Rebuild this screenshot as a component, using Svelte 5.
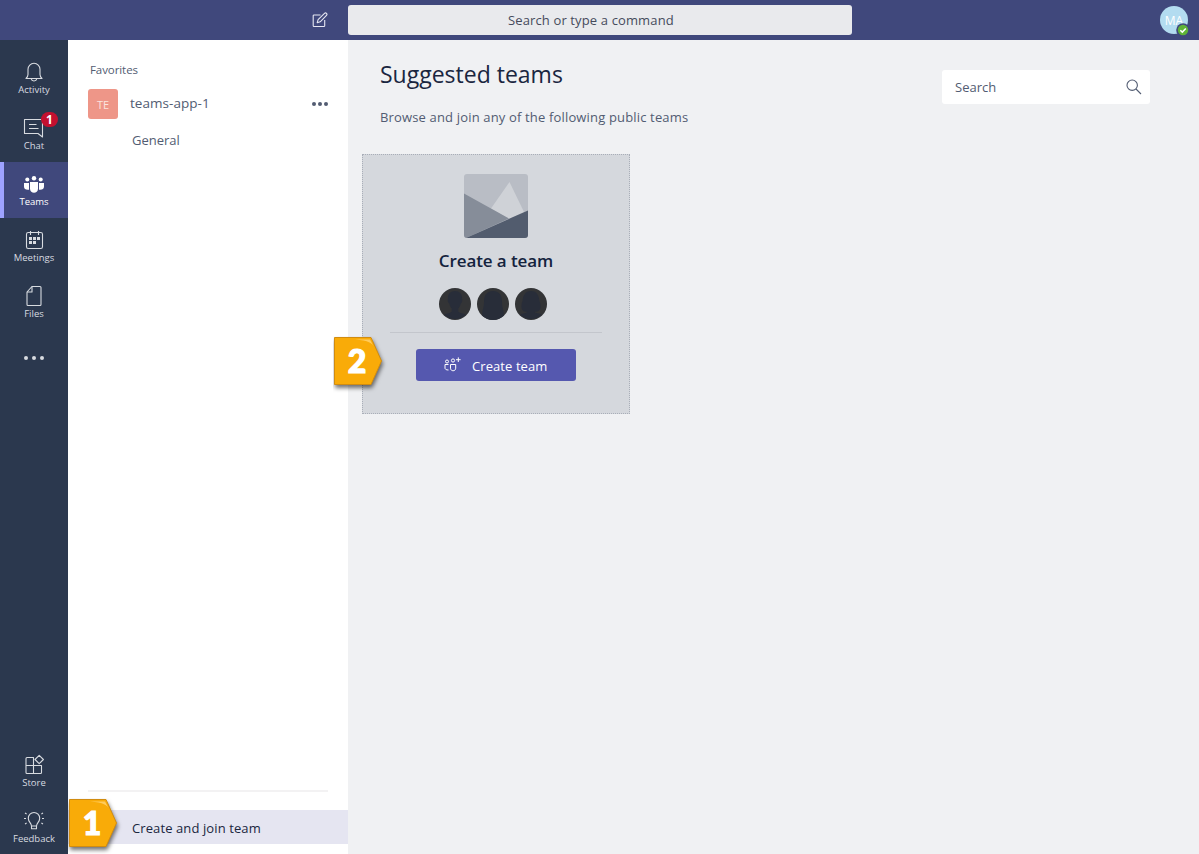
<script>
  const mainNav = [
    { id: 'activity', label: 'Activity' },
    { id: 'chat', label: 'Chat', badge: 1 },
    { id: 'teams', label: 'Teams', active: true },
    { id: 'meetings', label: 'Meetings' },
    { id: 'files', label: 'Files' },
    { id: 'more', label: '' }
  ];
  const footNav = [
    { id: 'store', label: 'Store' },
    { id: 'feedback', label: 'Feedback' }
  ];
</script>

{#snippet icon(id)}
  <svg class="icon" width="24" height="24" viewBox="0 0 24 24" fill="none" stroke="currentColor" stroke-width="1.1" stroke-linejoin="round">
    {#if id === 'activity'}
      <path d="M4 18.5h16c-1-1-2-2-2-4V9.300a6 6 0 0 0-12 0v5.200c0 2-1 3-2 4z" />
      <path d="M9.300 19c.4 2.600 5 2.600 5.400 0" />
    {:else if id === 'chat'}
      <path d="M2.500 3.500h18v17.500l-4.500-3.500H2.500z" />
      <path d="M7 8.500h7.500M7 12.500h9.500" />
    {:else if id === 'teams'}
      <g fill="currentColor" stroke="none" transform="translate(0 1)">
        <circle cx="5.300" cy="6.500" r="2" /><circle cx="12" cy="5.300" r="2.200" /><circle cx="18.700" cy="6.500" r="2" />
        <path d="M8 9h8v6.500c0 3-2 4.300-4 4.300s-4-1.300-4-4.300z" />
        <path d="M2 10h5v6.700c-3 .5-5-.8-5-3.200zM22 10h-5v6.700c3 .5 5-.8 5-3.200z" />
      </g>
    {:else if id === 'meetings'}
      <rect x="4.500" y="4.500" width="16" height="16" rx="1.800" />
      <path d="M8.500 3v4M16.500 3v4" />
      <g fill="currentColor" stroke="none">
        <path d="M7 9h3v3H7zM11 9h3v3h-3zM15 9h3v3h-3zM7 13h3v3H7zM11 13h3v3h-3z" />
      </g>
    {:else if id === 'files'}
      <path d="M10 2.500h8a1 1 0 0 1 1 1v17a1 1 0 0 1-1 1H6a1 1 0 0 1-1-1V8z" />
      <path d="M10 2.500V8H5" />
    {:else if id === 'store'}
      <g transform="translate(.5 0)">
        <path d="M3.500 5.500a1 1 0 0 1 1-1H11v16H4.500a1 1 0 0 1-1-1zM3.500 12.500H19v7a1 1 0 0 1-1 1h-7" />
        <path d="M16.700 2.300l4.200 4.200-4.200 4.200-4.200-4.200z" />
      </g>
    {:else if id === 'feedback'}
      <path d="M9.500 17c0-3-3.200-4-3.200-7.800a5.700 5.700 0 0 1 11.400 0C17.700 13 14.500 14 14.500 17zM9.500 17v2.700h5V17" />
      <path d="M2 9.500h2M20 9.500h2M3 4l1.600 1M21 4l-1.600 1M3 15l1.600-1M21 15l-1.600-1" />
    {/if}
  </svg>
{/snippet}

{#snippet navItem(item)}
  <div class="nav-item" class:active={item.active} class:more={item.id === 'more'}>
    {#if item.id === 'more'}
      <i></i><i></i><i></i>
    {:else}
      {@render icon(item.id)}
      <span class="nav-label">{item.label}</span>
      {#if item.badge}<b class="badge">{item.badge}</b>{/if}
    {/if}
  </div>
{/snippet}

{#snippet marker(n)}
  <svg width="60" height="62" viewBox="0 0 60 62">
    <path class="tag" d="M1.500 1.500H38L48.500 25 38 48.500H1.500z" />
    <path d="M22 3.500H37l4 7.500c-2-4-5-6.500-19-7.500z" fill="#ffcb5c" />
    <text x="24" y="37" text-anchor="middle">{n}</text>
  </svg>
{/snippet}

<div class="app">
  <header>
    <div class="head-left">
      <svg width="16" height="16" viewBox="0 0 16 16" fill="none" stroke="#e6e7f2" stroke-width="1.100" stroke-linejoin="round">
        <path d="M8.500 3H2a.8.8 0 0 0-.8.8v9.900a.8.800 0 0 0 .8.800h9.900a.8.800 0 0 0 .8-.8V8" />
        <path d="M5.200 10.700l.9-3L12.500 1.300a1 1 0 0 1 2 2L8.200 9.800z" />
      </svg>
    </div>
    <div class="command"><span>Search or type a command</span></div>
    <div class="me">
      <span>MA</span>
      <svg class="presence" width="14" height="14" viewBox="0 0 14 14">
        <circle cx="7" cy="7" r="6.800" fill="#40487c" />
        <circle cx="7" cy="7" r="5.200" fill="#5fb336" />
        <path d="M4.300 7.200l2 1.900 3.500-3.700" fill="none" stroke="#fff" stroke-width="1.500" />
      </svg>
    </div>
  </header>

  <div class="body">
    <nav>
      {#each mainNav as item}{@render navItem(item)}{/each}
      <div class="grow"></div>
      {#each footNav as item}{@render navItem(item)}{/each}
    </nav>

    <aside>
      <div class="fav">Favorites</div>
      <div class="team">
        <div class="team-logo">TE</div>
        <div class="team-name">teams-app-1</div>
        <div class="dots"><i></i><i></i><i></i></div>
      </div>
      <div class="channel">General</div>
      <div class="grow"></div>
      <hr />
      <div class="join">
        <span>Create and join team</span>
        <div class="marker first">{@render marker(1)}</div>
      </div>
    </aside>

    <main>
      <div class="main-head">
        <div>
          <h1>Suggested teams</h1>
          <p>Browse and join any of the following public teams</p>
        </div>
        <div class="search">
          <span>Search</span>
          <svg width="16" height="16" viewBox="0 0 16 16" fill="none" stroke="#525c72" stroke-width="1.100">
            <circle cx="6.200" cy="6.200" r="5.200" /><path d="M10 10l5 5" />
          </svg>
        </div>
      </div>

      <section class="card">
        <svg class="picture" width="64" height="64" viewBox="0 0 64 64">
          <rect width="64" height="64" fill="#b9bdc5" />
          <path d="M45.500 8L27 34.500 45 45 60 38z" fill="#cfd2d7" />
          <path d="M0 19.500L45 44.500 2 64H0z" fill="#868d99" />
          <path d="M2 64L64 36.500V64z" fill="#525c6e" />
        </svg>
        <h2>Create a team</h2>
        <div class="people">
          <svg width="32" height="32" viewBox="0 0 32 32">
            <circle cx="16" cy="16" r="16" fill="#333436" />
            <path d="M16 3c-5 0-7.500 3.500-7 8-.8 1 0 4 1.300 4.500.3 2.500 1.500 4 2.400 5v3c-1 1.800-5 1.800-7.500 3.200a16 16 0 0 0 21.600 0C24.300 25.300 20.300 25.300 19.300 23.500v-3c.9-1 2.100-2.500 2.400-5C23 15 23.800 12 23 11c.5-4.500-2-8-7-8z" fill="#282d39" />
          </svg>
          <svg width="32" height="32" viewBox="0 0 32 32">
            <circle cx="16" cy="16" r="16" fill="#333436" />
            <path d="M16 3C9 3 7 8 7 14c0 6-2 8-1.800 13.700a16 16 0 0 0 21.600 0C27 22 25 20 25 14c0-6-2-11-9-11z" fill="#282d39" />
          </svg>
          <svg width="32" height="32" viewBox="0 0 32 32">
            <circle cx="16" cy="16" r="16" fill="#333436" />
            <path d="M16 3C10 3 8 8 7.500 13 6 16 6 21 8 22.500c1.500 1.500 3.500 1.500 4.500 1.200-1 1.500-5 1.500-7.300 3a16 16 0 0 0 21.600 0c-2.300-1.500-6.300-1.500-7.300-3 1 .3 3 .3 4.500-1.200 2-1.500 2-6.500.5-9.500C24 8 22 3 16 3z" fill="#282d39" />
          </svg>
        </div>
        <div class="rule"></div>
        <button>
          <svg width="18" height="16" viewBox="0 0 18 16" fill="none" stroke="#fff" stroke-width="1">
            <circle cx="3" cy="4.500" r="1.500" /><circle cx="9" cy="3.500" r="1.600" />
            <path d="M4.500 7.500H1V11c0 1.200 1 2 3.500 2M6.500 7.500h5.200v3.700c0 3.400-5.200 3.400-5.200 0zM12 2.700h4.600M14.300.4V5" />
          </svg>
          <span>Create team</span>
        </button>
        <div class="marker second">{@render marker(2)}</div>
      </section>
    </main>
  </div>
</div>

<style>
  :global(body) { margin: 0; overflow: hidden; }
  .app {
    width: 1199px; height: 854px; overflow: hidden;
    display: flex; flex-direction: column;
    font-family: 'Open Sans', 'Noto Sans', sans-serif;
    font-size: 14px; color: #525c72;
  }
  header { height: 40px; flex: none; display: flex; align-items: center; background: #40487c; }
  .head-left { width: 348px; box-sizing: border-box; padding-right: 20px; display: flex; justify-content: flex-end; }
  .command {
    width: 504px; height: 30px; border-radius: 3px; background: #e9eaed;
    display: flex; align-items: center; padding-left: 160px; box-sizing: border-box;
    font-size: 13px; letter-spacing: .13px; color: #464b5c; white-space: nowrap;
  }
  .me {
    position: relative; width: 28px; height: 28px; margin-left: auto; margin-right: 11px;
    border-radius: 50%; background: #b3dcf0; color: #fff; font-size: 12px;
    display: flex; align-items: center; justify-content: center;
  }
  .presence { position: absolute; right: -2px; bottom: -3px; }

  .body { flex: 1; min-height: 0; display: flex; }
  .grow { flex: 1; }
  nav { width: 68px; flex: none; background: #2b384e; display: flex; flex-direction: column; padding-top: 10px; margin-bottom: -1px; color: #d8dbe0; }
  .nav-item { position: relative; height: 56px; box-sizing: border-box; padding-top: 10px; display: flex; flex-direction: column; align-items: center; }
  .nav-item.active { background: #40487c; color: #fff; box-shadow: inset 4px 0 #9ea2ff; }
  .nav-item.more { flex-direction: row; justify-content: center; gap: 4px; padding: 0; }
  .nav-item.more i { width: 4px; height: 4px; border-radius: 50%; background: currentColor; }
  .icon { display: block; flex: none; }
  .nav-label { font-size: 9.500px; line-height: 12px; }
  .badge {
    position: absolute; left: 41px; top: 6px; width: 17px; height: 15px; border-radius: 8px;
    background: #c4102f; color: #fff; font-size: 12px; line-height: 15px; text-align: center;
  }

  aside { width: 280px; flex: none; background: #fff; display: flex; flex-direction: column; }
  .fav { margin: 20px 0 0 22px; font-size: 11.500px; letter-spacing: -.08px; line-height: 20px; }
  .team { display: flex; align-items: center; margin: 9px 20px 0; height: 30px; }
  .team-logo { width: 30px; height: 30px; border-radius: 3px; background: #ee9688; color: #fbe4df; font-size: 11px; display: flex; align-items: center; justify-content: center; }
  .team-name { margin: 0 0 2px 12px; flex: 1; font-size: 13.500px; letter-spacing: .04px; }
  .dots { display: flex; gap: 2px; }
  .dots i { width: 4px; height: 4px; border-radius: 50%; background: #525c72; }
  .channel { margin: 11px 0 0 64px; line-height: 20px; font-size: 13px; }
  hr { width: 240px; height: 2px; border: 0; margin: 0 20px 18px; background: #f3f2f3; }
  .join { position: relative; height: 34px; margin-bottom: 10px; background: #e5e5f1; display: flex; align-items: center; padding: 2px 0 0 64px; box-sizing: border-box; color: #1a2640; font-size: 13px; letter-spacing: .1px; }

  main { flex: 1; background: #f0f1f3; }
  .main-head { display: flex; justify-content: space-between; height: 114px; box-sizing: border-box; padding: 17px 49px 0 32px; }
  h1 { margin: 0; font-size: 23px; line-height: 34px; font-weight: 400; color: #1a2640; white-space: nowrap; }
  p { margin: 16px 0 0; font-size: 13px; letter-spacing: .16px; line-height: 20px; white-space: nowrap; }
  .search { width: 208px; height: 34px; margin-top: 13px; box-sizing: border-box; padding: 0 8px 0 13px; border-radius: 3px; background: #fff; display: flex; align-items: center; justify-content: space-between; font-size: 13px; }

  .card { position: relative; width: 268px; height: 260px; margin-left: 14px; box-sizing: border-box; padding-top: 19px; border: 1px dotted #a9aeb8; background: #d5d8dd; display: flex; flex-direction: column; align-items: center; }
  .picture { border-radius: 3px; flex: none; }
  h2 { margin: 11px 0 0; font-size: 17px; letter-spacing: -.1px; line-height: 24px; font-weight: 600; color: #14233d; }
  .people { display: flex; gap: 6px; margin: 15px 6px 0 0; }
  .people svg { display: block; }
  .rule { width: 212px; height: 1px; margin-top: 12px; background: #c3c6cc; }
  button { margin: 16px 0 0; width: 160px; height: 32px; border: 0; border-radius: 3px; padding: 0 0 0 28px; background: #5558af; color: #fff; font: 13px 'Open Sans', sans-serif; letter-spacing: .08px; display: flex; align-items: center; gap: 10px; }
  button span { padding-top: 2px; }

  .marker { position: absolute; line-height: 0; letter-spacing: 0; }
  .marker.first { left: 0; top: -12px; }
  .marker.second { left: -30px; top: 181px; }
  .marker text { font: 900 32px Lato, sans-serif; fill: #fff; stroke: #fff; stroke-width: 1.2; }
  .tag { fill: #f9ab08; stroke: #d18c10; stroke-width: 1; filter: drop-shadow(1px 3px 2px rgba(0, 0, 0, .55)); }
</style>
